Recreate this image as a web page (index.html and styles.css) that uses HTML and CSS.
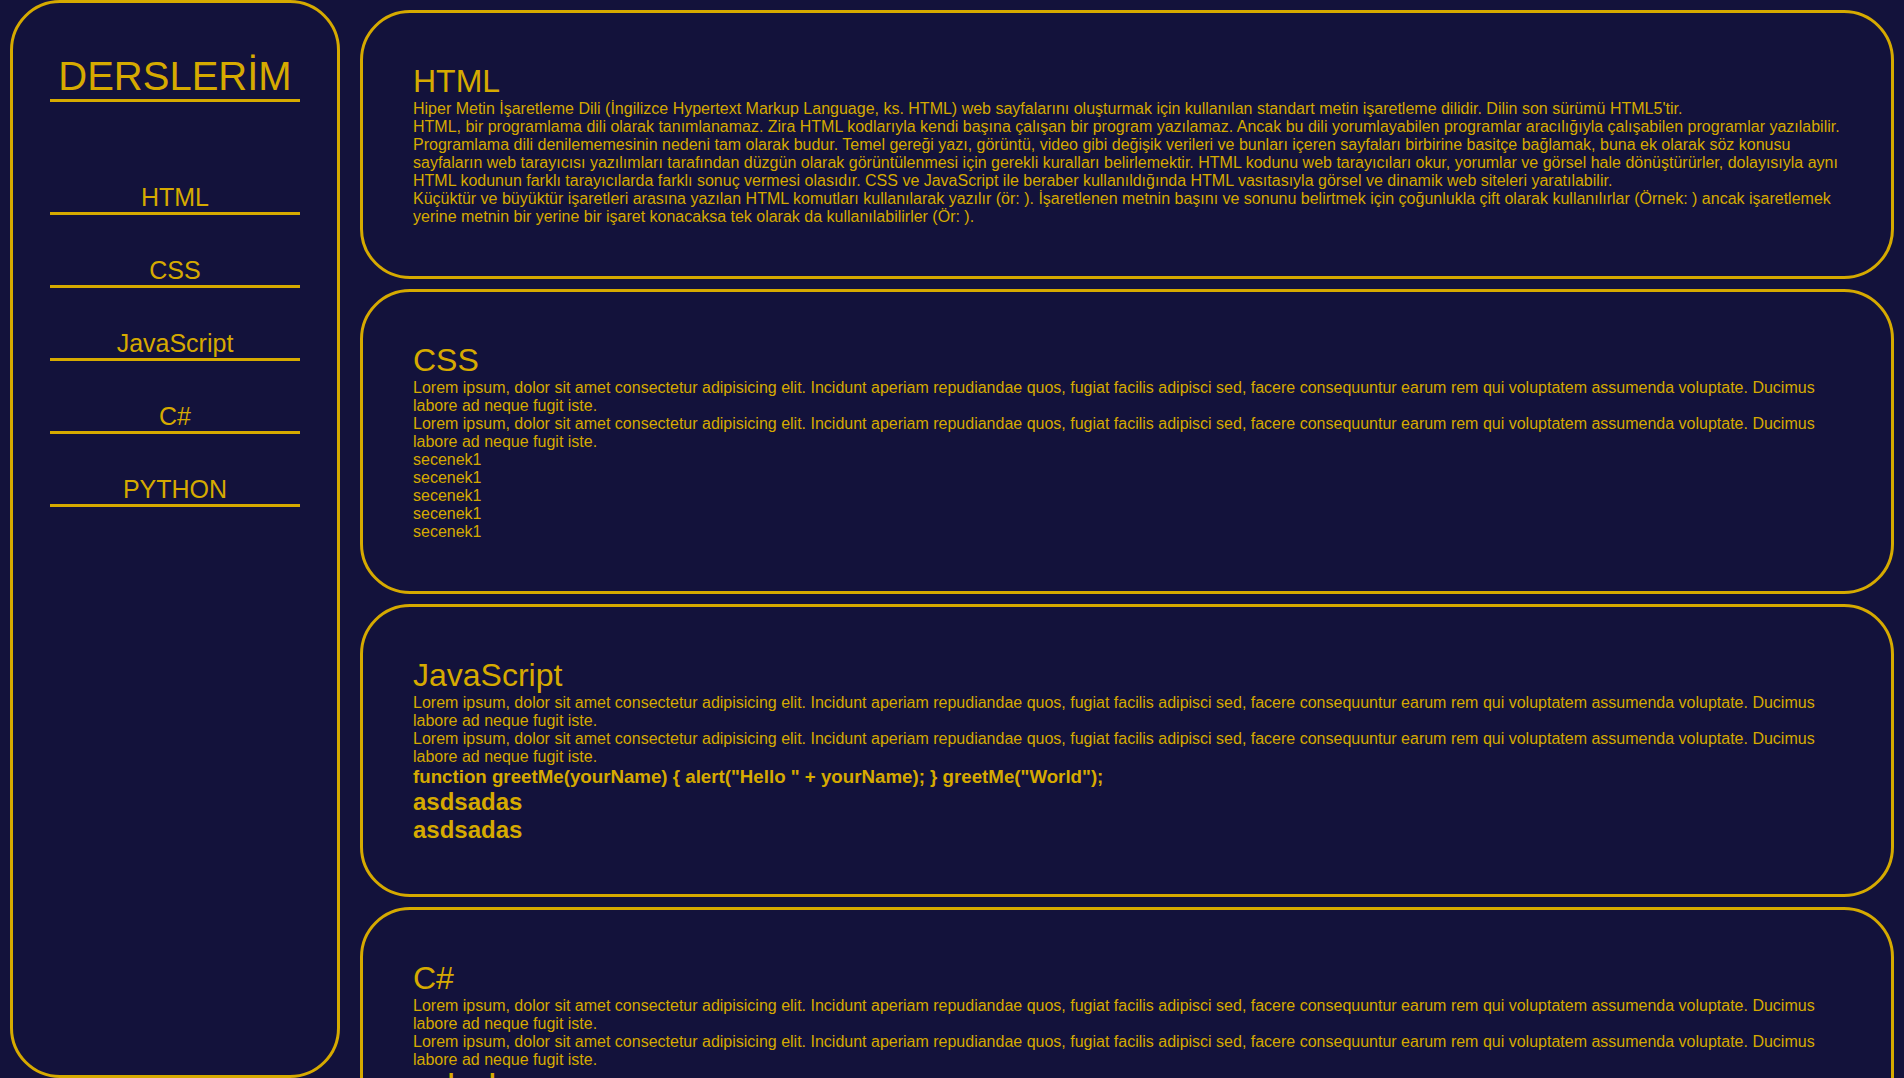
FILE: index.html
```html
<!DOCTYPE html>
<html lang="tr">
<head>
<meta charset="utf-8">
<title>Derslerim</title>
<link rel="stylesheet" href="styles.css">
</head>
<body>
<aside class="sidebar">
  <h1 class="brand">DERSLERİM</h1>
  <nav class="menu">
    <a class="menu-item" href="#html">HTML</a>
    <a class="menu-item" href="#css">CSS</a>
    <a class="menu-item" href="#js">JavaScript</a>
    <a class="menu-item" href="#cs">C#</a>
    <a class="menu-item" href="#py">PYTHON</a>
  </nav>
</aside>
<main class="content">
  <section class="card" id="html">
    <h1 class="card-title">HTML</h1>
    <p class="text">Hiper Metin İşaretleme Dili (İngilizce Hypertext Markup Language, ks. HTML) web sayfalarını oluşturmak için kullanılan standart metin işaretleme dilidir. Dilin son sürümü HTML5'tir.</p>
    <p class="text">HTML, bir programlama dili olarak tanımlanamaz. Zira HTML kodlarıyla kendi başına çalışan bir program yazılamaz. Ancak bu dili yorumlayabilen programlar aracılığıyla çalışabilen programlar yazılabilir.</p>
    <p class="text">Programlama dili denilememesinin nedeni tam olarak budur. Temel gereği yazı, görüntü, video gibi değişik verileri ve bunları içeren sayfaları birbirine basitçe bağlamak, buna ek olarak söz konusu sayfaların web tarayıcısı yazılımları tarafından düzgün olarak görüntülenmesi için gerekli kuralları belirlemektir. HTML kodunu web tarayıcıları okur, yorumlar ve görsel hale dönüştürürler, dolayısıyla aynı HTML kodunun farklı tarayıcılarda farklı sonuç vermesi olasıdır. CSS ve JavaScript ile beraber kullanıldığında HTML vasıtasıyla görsel ve dinamik web siteleri yaratılabilir.</p>
    <p class="text">Küçüktür ve büyüktür işaretleri arasına yazılan HTML komutları kullanılarak yazılır (ör: ). İşaretlenen metnin başını ve sonunu belirtmek için çoğunlukla çift olarak kullanılırlar (Örnek: ) ancak işaretlemek yerine metnin bir yerine bir işaret konacaksa tek olarak da kullanılabilirler (Ör: ).</p>
  </section>
  <section class="card" id="css">
    <h1 class="card-title">CSS</h1>
    <p class="text">Lorem ipsum, dolor sit amet consectetur adipisicing elit. Incidunt aperiam repudiandae quos, fugiat facilis adipisci sed, facere consequuntur earum rem qui voluptatem assumenda voluptate. Ducimus labore ad neque fugit iste.</p>
    <p class="text">Lorem ipsum, dolor sit amet consectetur adipisicing elit. Incidunt aperiam repudiandae quos, fugiat facilis adipisci sed, facere consequuntur earum rem qui voluptatem assumenda voluptate. Ducimus labore ad neque fugit iste.</p>
    <ul class="options">
      <li>secenek1</li>
      <li>secenek1</li>
      <li>secenek1</li>
      <li>secenek1</li>
      <li>secenek1</li>
    </ul>
  </section>
  <section class="card" id="js">
    <h1 class="card-title">JavaScript</h1>
    <p class="text">Lorem ipsum, dolor sit amet consectetur adipisicing elit. Incidunt aperiam repudiandae quos, fugiat facilis adipisci sed, facere consequuntur earum rem qui voluptatem assumenda voluptate. Ducimus labore ad neque fugit iste.</p>
    <p class="text">Lorem ipsum, dolor sit amet consectetur adipisicing elit. Incidunt aperiam repudiandae quos, fugiat facilis adipisci sed, facere consequuntur earum rem qui voluptatem assumenda voluptate. Ducimus labore ad neque fugit iste.</p>
    <h3 class="code">function greetMe(yourName) { alert("Hello " + yourName); } greetMe("World");</h3>
    <h2 class="sub">asdsadas</h2>
    <h2 class="sub">asdsadas</h2>
  </section>
  <section class="card" id="cs">
    <h1 class="card-title">C#</h1>
    <p class="text">Lorem ipsum, dolor sit amet consectetur adipisicing elit. Incidunt aperiam repudiandae quos, fugiat facilis adipisci sed, facere consequuntur earum rem qui voluptatem assumenda voluptate. Ducimus labore ad neque fugit iste.</p>
    <p class="text">Lorem ipsum, dolor sit amet consectetur adipisicing elit. Incidunt aperiam repudiandae quos, fugiat facilis adipisci sed, facere consequuntur earum rem qui voluptatem assumenda voluptate. Ducimus labore ad neque fugit iste.</p>
    <h2 class="sub">asdsadas</h2>
    <h2 class="sub">asdsadas</h2>
  </section>
  <section class="card" id="py">
    <h1 class="card-title">PYTHON</h1>
    <p class="text">Lorem ipsum, dolor sit amet consectetur adipisicing elit. Incidunt aperiam repudiandae quos, fugiat facilis adipisci sed, facere consequuntur earum rem qui voluptatem assumenda voluptate. Ducimus labore ad neque fugit iste.</p>
  </section>
</main>
</body>
</html>
```

FILE: styles.css
```css
* {
  box-sizing: border-box;
}

html, body {
  margin: 0;
  padding: 0;
}

body {
  background: #13123b;
  color: #d6aa00;
  font-family: "Liberation Sans", Arial, sans-serif;
  display: flex;
  align-items: flex-start;
}

.sidebar {
  flex: 0 0 330px;
  width: 330px;
  height: 100vh;
  margin-left: 10px;
  border: 3px solid #d6aa00;
  border-radius: 50px;
  padding-top: 51px;
  display: flex;
  flex-direction: column;
  align-items: center;
  position: sticky;
  top: 0;
}

.brand {
  width: 250px;
  margin: 0;
  font-size: 40px;
  font-weight: normal;
  text-align: center;
  border-bottom: 3px solid #d6aa00;
}

.menu {
  display: flex;
  flex-direction: column;
  align-items: center;
  gap: 41px;
  margin-top: 81px;
}

.menu-item {
  display: block;
  width: 250px;
  color: #d6aa00;
  text-decoration: none;
  text-align: center;
  font-size: 25px;
  border-bottom: 3px solid #d6aa00;
}

.content {
  flex: 1;
  margin-left: 10px;
  min-width: 0;
}

.card {
  margin: 10px;
  border: 3px solid #d6aa00;
  border-radius: 50px;
  padding: 50px;
}

.card-title {
  margin: 0;
  font-size: 32px;
  font-weight: normal;
}

.text {
  margin: 0;
  font-size: 16px;
  line-height: 18px;
}

.options {
  list-style: none;
  margin: 0;
  padding: 0;
  font-size: 16px;
  line-height: 18px;
}

.code {
  margin: 0;
  font-size: 18.72px;
}

.sub {
  margin: 0;
  font-size: 24px;
}
```
